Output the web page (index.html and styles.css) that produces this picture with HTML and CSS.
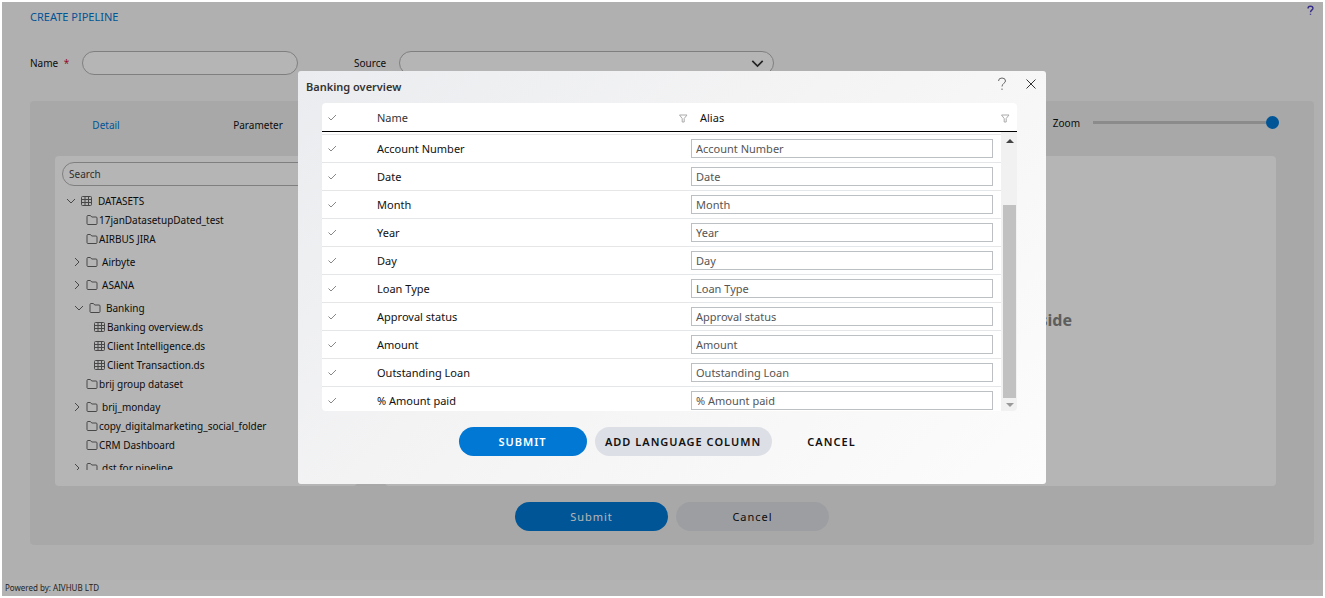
FILE: index.html
```html
<!DOCTYPE html>
<html lang="en">
<head>
<meta charset="utf-8">
<title>Create Pipeline</title>
<link rel="stylesheet" href="styles.css">
</head>
<body>
<svg class="sprite" aria-hidden="true">
  <symbol id="folder" viewBox="0 0 12 12"><path d="M1 9.500V2.500q0-1 1-1h2.400l1.300 1.500h4.300q1 0 1 1v5.500q0 1-1 1h-8q-1 0-1-1z"/></symbol>
  <symbol id="grid" viewBox="0 0 12 12"><path d="M1.500 1.500h8q1 0 1 1v7q0 1-1 1h-8q-1 0-1-1v-7q0-1 1-1zM.5 4.500h10M.5 7.500h10M4 1.500v9M7.500 1.500v9"/></symbol>
  <symbol id="down" viewBox="0 0 10 10"><path d="M1 3l4 4 4-4"/></symbol>
  <symbol id="right" viewBox="0 0 10 10"><path d="M3 1l4 4-4 4"/></symbol>
  <symbol id="check" viewBox="0 0 10 10"><path d="M1.500 4.500l2.500 2.500L9 2"/></symbol>
  <symbol id="filter" viewBox="0 0 10 10"><path d="M1.500 2h7.500L6.200 5.500v3.500H4.200V5.500z"/></symbol>
  <symbol id="help" viewBox="0 0 10 14"><path d="M1.500 4Q1.500 1 5 1t3.500 3c0 2-3.500 2.500-3.500 5.500M5 11.500v1.500"/></symbol>
  <symbol id="close" viewBox="0 0 12 12"><path d="M1.500 1.500l9 9M10.500 1.500l-9 9"/></symbol>
</svg>
<div class="page">
  <header class="topbar">
    <h1 class="title">CREATE PIPELINE</h1>
    <a class="help-link" href="#" aria-label="Help"><svg class="icon"><use href="#help"/></svg></a>
  </header>
  <form class="source-form">
    <label class="label" for="name">Name <span class="required">*</span></label>
    <input class="pill name" id="name" type="text">
    <label class="label source-label" for="source">Source</label>
    <span class="select-box">
      <select class="pill" id="source"><option></option></select>
      <svg class="icon select-arrow"><use href="#down"/></svg>
    </span>
  </form>
  <main class="panel">
    <div class="toolbar">
      <nav class="tabs">
        <a class="tab active" href="#">Detail</a>
        <a class="tab" href="#">Parameter</a>
      </nav>
      <div class="zoom">
        <label for="zoom">Zoom</label>
        <input class="slider" id="zoom" type="range" value="100">
      </div>
    </div>
    <div class="workspace">
      <section class="card explorer">
        <input class="pill search" type="text" placeholder="Search" aria-label="Search">
        <ul class="tree">
          <li class="node root"><svg class="icon chev"><use href="#down"/></svg><svg class="icon"><use href="#grid"/></svg>DATASETS</li>
          <li class="node leaf"><svg class="icon"><use href="#folder"/></svg>17janDatasetupDated_test</li>
          <li class="node leaf"><svg class="icon"><use href="#folder"/></svg>AIRBUS JIRA</li>
          <li class="node branch"><svg class="icon chev"><use href="#right"/></svg><svg class="icon"><use href="#folder"/></svg>Airbyte</li>
          <li class="node branch"><svg class="icon chev"><use href="#right"/></svg><svg class="icon"><use href="#folder"/></svg>ASANA</li>
          <li class="node branch open"><svg class="icon chev"><use href="#down"/></svg><svg class="icon"><use href="#folder"/></svg>Banking</li>
          <li class="node file"><svg class="icon"><use href="#grid"/></svg>Banking overview.ds</li>
          <li class="node file"><svg class="icon"><use href="#grid"/></svg>Client Intelligence.ds</li>
          <li class="node file"><svg class="icon"><use href="#grid"/></svg>Client Transaction.ds</li>
          <li class="node leaf"><svg class="icon"><use href="#folder"/></svg>brij group dataset</li>
          <li class="node branch"><svg class="icon chev"><use href="#right"/></svg><svg class="icon"><use href="#folder"/></svg>brij_monday</li>
          <li class="node leaf"><svg class="icon"><use href="#folder"/></svg>copy_digitalmarketing_social_folder</li>
          <li class="node leaf"><svg class="icon"><use href="#folder"/></svg>CRM Dashboard</li>
          <li class="node branch"><svg class="icon chev"><use href="#right"/></svg><svg class="icon"><use href="#folder"/></svg>dst for pipeline</li>
        </ul>
      </section>
      <section class="card canvas"><p class="hint">side</p></section>
    </div>
    <div class="actions">
      <button class="btn primary">Submit</button>
      <button class="btn neutral">Cancel</button>
    </div>
  </main>
  <footer class="footer">Powered by: AIVHUB LTD</footer>

  <div class="overlay">
    <div class="dialog" role="dialog" aria-labelledby="dialog-title">
      <div class="dialog-head">
        <h2 class="dialog-title" id="dialog-title">Banking overview</h2>
        <button class="icon-btn" aria-label="Help"><svg class="icon help"><use href="#help"/></svg></button>
        <button class="icon-btn" aria-label="Close"><svg class="icon close"><use href="#close"/></svg></button>
      </div>
      <div class="table-box">
        <table class="columns">
          <thead>
            <tr>
              <th class="tick"><svg class="icon"><use href="#check"/></svg></th>
              <th class="field"><span class="head-cell">Name<svg class="icon"><use href="#filter"/></svg></span></th>
              <th class="alias"><span class="head-cell strong">Alias<svg class="icon"><use href="#filter"/></svg></span></th>
            </tr>
          </thead>
          <tbody>
            <tr><td><svg class="icon"><use href="#check"/></svg></td><td>Account Number</td><td><input class="alias-input" aria-label="Alias" value="Account Number"></td></tr>
            <tr><td><svg class="icon"><use href="#check"/></svg></td><td>Date</td><td><input class="alias-input" aria-label="Alias" value="Date"></td></tr>
            <tr><td><svg class="icon"><use href="#check"/></svg></td><td>Month</td><td><input class="alias-input" aria-label="Alias" value="Month"></td></tr>
            <tr><td><svg class="icon"><use href="#check"/></svg></td><td>Year</td><td><input class="alias-input" aria-label="Alias" value="Year"></td></tr>
            <tr><td><svg class="icon"><use href="#check"/></svg></td><td>Day</td><td><input class="alias-input" aria-label="Alias" value="Day"></td></tr>
            <tr><td><svg class="icon"><use href="#check"/></svg></td><td>Loan Type</td><td><input class="alias-input" aria-label="Alias" value="Loan Type"></td></tr>
            <tr><td><svg class="icon"><use href="#check"/></svg></td><td>Approval status</td><td><input class="alias-input" aria-label="Alias" value="Approval status"></td></tr>
            <tr><td><svg class="icon"><use href="#check"/></svg></td><td>Amount</td><td><input class="alias-input" aria-label="Alias" value="Amount"></td></tr>
            <tr><td><svg class="icon"><use href="#check"/></svg></td><td>Outstanding Loan</td><td><input class="alias-input" aria-label="Alias" value="Outstanding Loan"></td></tr>
            <tr><td><svg class="icon"><use href="#check"/></svg></td><td>% Amount paid</td><td><input class="alias-input" aria-label="Alias" value="% Amount paid"></td></tr>
          </tbody>
        </table>
        <div class="scrollbar"><span class="arrow up"></span><span class="thumb"></span><span class="arrow dn"></span></div>
      </div>
      <div class="dialog-actions">
        <button class="btn bold primary">SUBMIT</button>
        <button class="btn bold neutral wide">ADD LANGUAGE COLUMN</button>
        <button class="btn bold plain">CANCEL</button>
      </div>
    </div>
  </div>
</div>
</body>
</html>
```
FILE: styles.css
```css
* { box-sizing: border-box; }
body { margin: 0; padding: 2px; background: #fff; font: 10px/16px "Noto Sans", sans-serif; color: #111; }
h1, h2, p, ul { margin: 0; padding: 0; }
ul { list-style: none; }
a { color: inherit; text-decoration: none; }
input, select, button { font: inherit; color: inherit; }
.sprite { display: none; }
.icon { width: 12px; height: 12px; flex: none; fill: none; stroke: #666; stroke-width: 1; display: block; }

.page { position: relative; min-height: calc(100vh - 4px); display: flex; flex-direction: column; background: #f8f8f8; }
.topbar { display: flex; justify-content: space-between; padding: 3px 9px 0 28px; height: 49px; }
.title { font-size: 11px; font-weight: 400; line-height: 24px; color: #0078d4; }
.help-link .icon { width: 7px; height: 11px; stroke: #4a3fc0; stroke-width: 2; }
.source-form { display: flex; align-items: center; padding-left: 28px; height: 24px; }
.label { width: 52px; }
.required { color: #d0103a; margin-left: 3px; }
.pill { height: 24px; border: 1px solid #b4b4b4; border-radius: 12px; background: #fff; outline: 0; appearance: none; }
.name { width: 216px; }
.source-label { margin-left: 56px; width: 45px; }
.select-box { position: relative; width: 375px; }
.select-box .pill { width: 100%; display: block; }
.select-arrow { position: absolute; right: 10px; top: 6px; width: 13px; height: 13px; stroke: #333; stroke-width: 1.3; }

.panel { margin: 26px 9px 0 28px; padding: 0 38px 14px 25px; background: #ededed; border-radius: 4px; }
.toolbar { display: flex; justify-content: space-between; height: 55px; padding-bottom: 7px; align-items: center; }
.tabs { display: flex; width: 304px; margin-left: -25px; }
.tab { flex: 1; text-align: center; }
.tab.active { color: #0078d4; }
.zoom { display: flex; align-items: center; gap: 13px; margin: 0 -3px 5px 0; }
.slider { appearance: none; width: 186px; height: 13px; margin: 0; background: linear-gradient(#c4c4c4, #c4c4c4) center / 100% 3px no-repeat; }
.slider::-webkit-slider-thumb { appearance: none; width: 13px; height: 13px; border-radius: 50%; background: #0078d4; }
.workspace { display: grid; grid-template-columns: 302px 1fr; gap: 28px; }
.card { background: #fff; border-radius: 4px; height: 330px; }
.explorer { padding: 6px 7px 16px; display: flex; flex-direction: column; }
.search { width: 100%; padding: 0 6px; flex: none; }
.search::placeholder { color: #444; opacity: 1; }
.tree { margin-top: 5px; overflow: hidden; flex: 1; }
.node { display: flex; align-items: center; height: 19px; padding-left: 24px; gap: 1px; white-space: nowrap; }
.node.root { padding-left: 4px; gap: 5px; }
.chev { width: 10px; height: 10px; }
.node.branch { height: 23px; padding: 4px 0 0 10px; gap: 4px; }
.node.open { padding-left: 12px; gap: 5px; }
.node.file { padding-left: 32px; }
.canvas { display: flex; align-items: center; justify-content: flex-end; padding: 0 204px 2px 0; }
.hint { font-size: 16px; font-weight: 700; color: #858585; }
.actions { display: flex; justify-content: center; gap: 8px; margin: 16px -13px 0 0; }
.btn { height: 29px; width: 153px; border: 0; border-radius: 15px; font-size: 11px; letter-spacing: 1px; padding: 0; background: none; }
.btn.primary { background: #0078d4; color: #fff; }
.btn.neutral { background: #dcdfe5; }
.footer { margin-top: auto; padding: 0 3px; font-size: 8px; background: #fcfcfc; color: #333; }

.overlay { position: absolute; inset: 0; padding: 69px 9px 0 28px; background: rgba(0, 0, 0, .29); display: flex; justify-content: center; align-items: flex-start; }
.dialog { width: 748px; padding: 0 29px 28px 24px; border-radius: 3px; background: linear-gradient(135deg, #eaecef, #f3f3f4 40%, #fdfcfd); }
.dialog-head { display: flex; align-items: center; height: 32px; margin: 0 -20px 0 -16px; gap: 18px; }
.dialog-title { flex: 1; font-size: 11px; font-weight: 600; color: #333; }
.icon-btn { border: 0; padding: 0 0 6px; background: none; }
.icon.help { width: 10px; height: 14px; }
.icon.close { stroke: #333; }
.table-box { position: relative; height: 308px; overflow: hidden; background: #fff; border-radius: 4px; }
.columns { width: 100%; border-spacing: 0; table-layout: fixed; font-size: 11px; }
.columns th { height: 29px; padding: 2px 0 0; border-bottom: 1px solid #000; font-weight: 400; text-align: left; color: #333; }
.columns tbody::before { content: ""; display: block; height: 2px; }
.columns td { height: 28px; padding: 0; border-top: 1px solid #e4e6e8; }
.columns th:first-child, .columns td:first-child { padding-left: 5px; }
.columns .icon { width: 10px; height: 10px; stroke: #888; }
.columns .head-cell .icon { stroke: #aaa; }
.tick { width: 55px; }
.field { width: 314px; }
.head-cell { display: flex; align-items: center; justify-content: space-between; padding-right: 3px; }
.head-cell.strong { padding: 0 7px 0 9px; color: #111; }
.alias-input { display: block; width: 302px; height: 19px; padding: 0 4px; border: 1px solid #bcc0c2; background: #fff; color: #555; }
.scrollbar { position: absolute; right: 0; top: 29px; bottom: 0; width: 16px; padding: 7px 1px 4px 2px; background: #f1f1f1; display: flex; flex-direction: column; align-items: center; }
.arrow { border: 4px solid transparent; }
.arrow.up { border-top: 0; border-bottom-color: #444; }
.arrow.dn { border-bottom: 0; border-top-color: #999; margin-top: 5px; }
.thumb { width: 13px; height: 193px; margin-top: auto; background: #c1c1c1; }
.dialog-actions { display: flex; justify-content: center; gap: 8px; margin: 16px -3px 0 0; }
.btn.bold { width: 128px; font-weight: 600; }
.btn.bold.wide { width: 177px; }
.btn.bold.plain { width: 104px; }
```
